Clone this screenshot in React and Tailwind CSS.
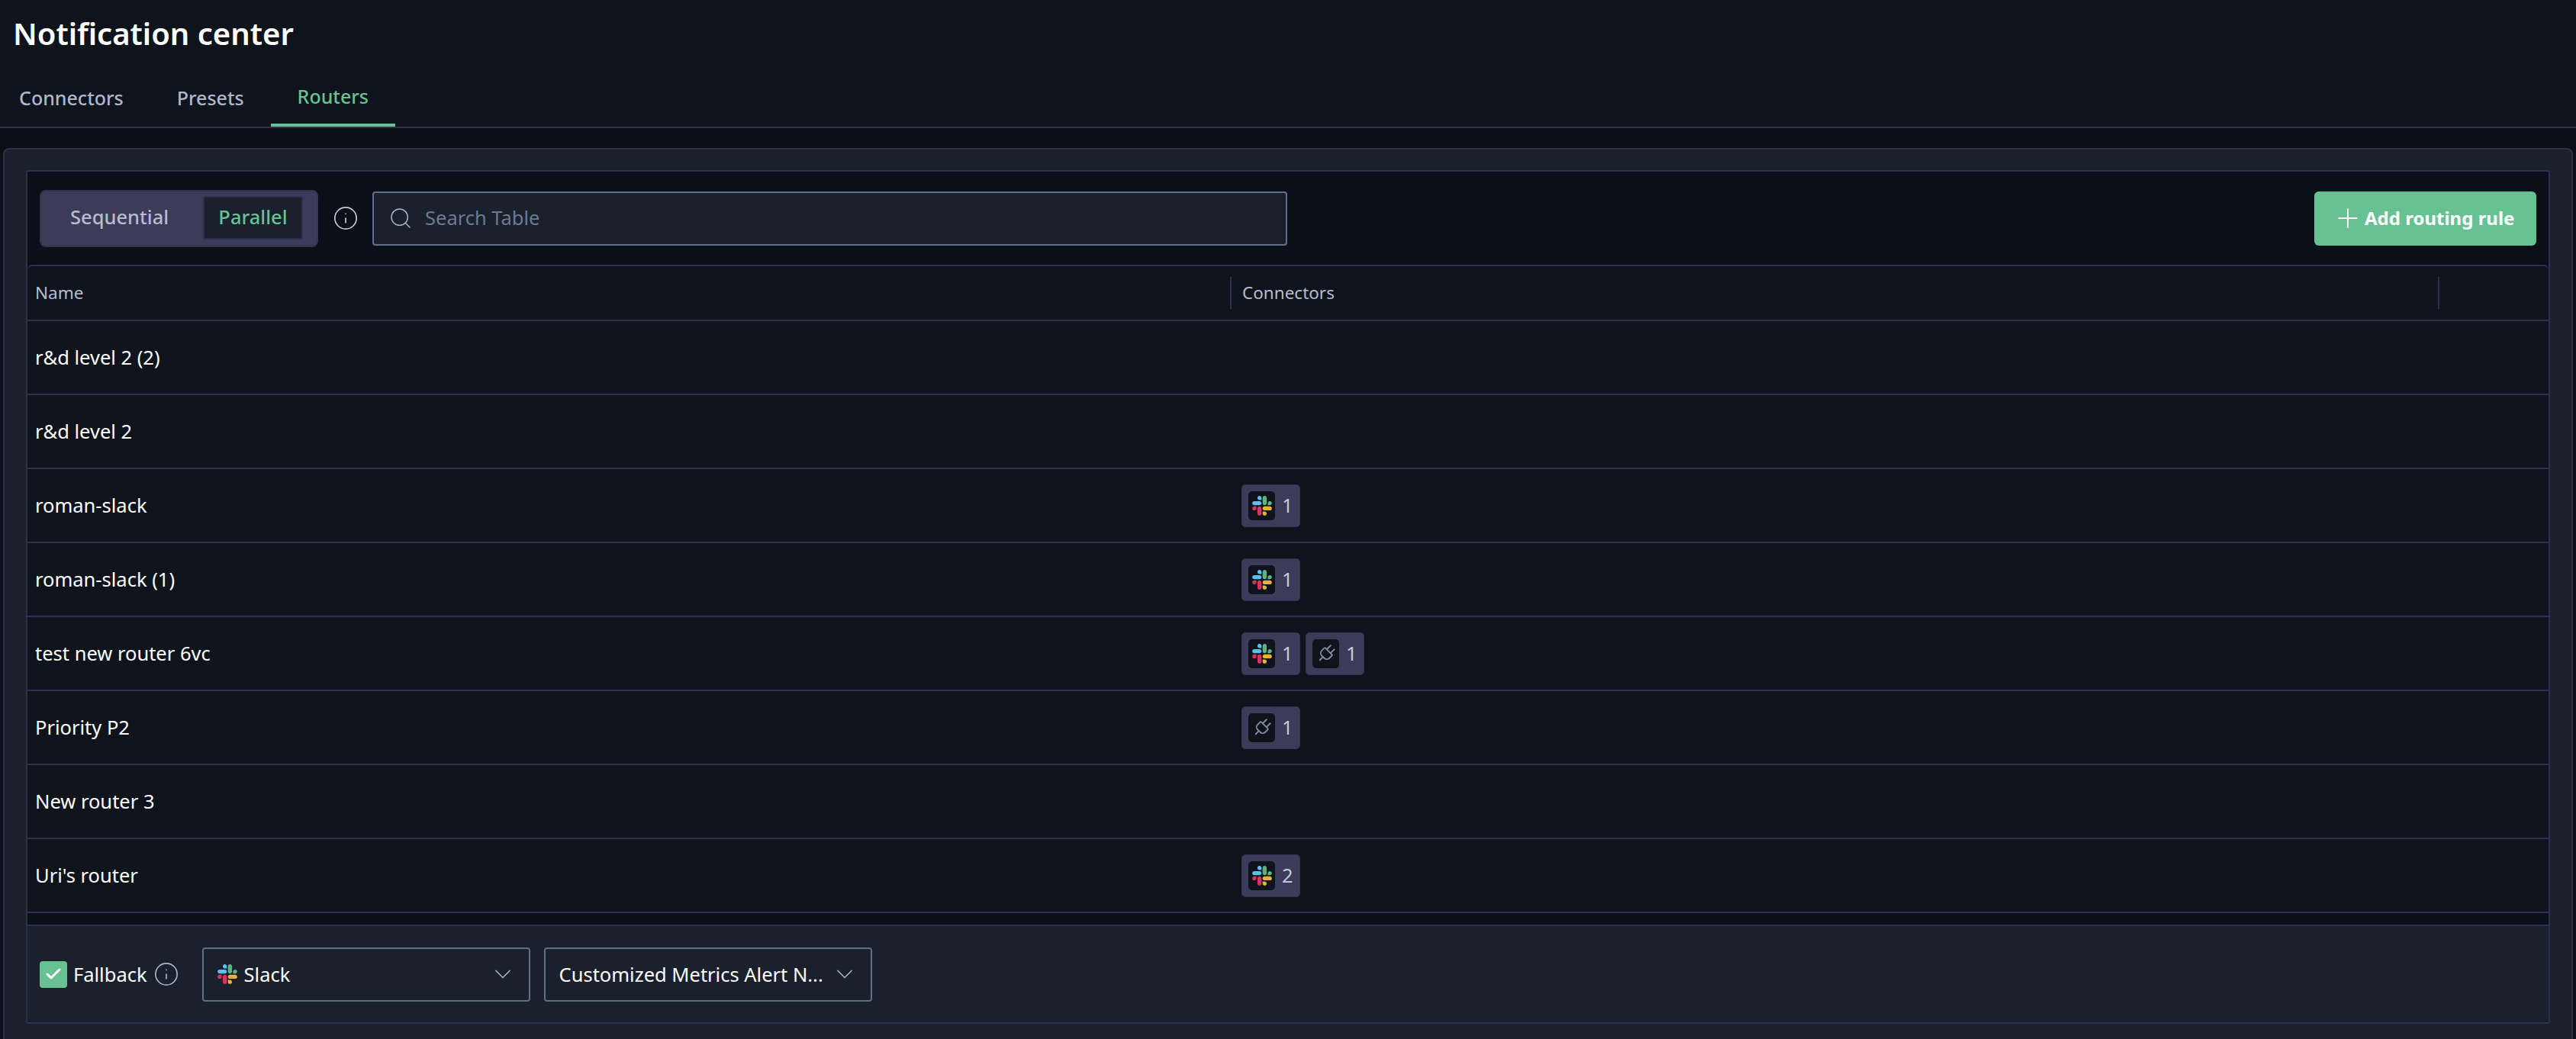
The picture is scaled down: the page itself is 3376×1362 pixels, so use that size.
import { Info, Search, Plus, Plug, ChevronDown, Check } from 'lucide-react';

const routers = [
  { name: 'r&d level 2 (2)', connectors: [] },
  { name: 'r&d level 2', connectors: [] },
  { name: 'roman-slack', connectors: [['slack', 1]] },
  { name: 'roman-slack (1)', connectors: [['slack', 1]] },
  { name: 'test new router 6vc', connectors: [['slack', 1], ['plug', 1]] },
  { name: 'Priority P2', connectors: [['plug', 1]] },
  { name: 'New router 3', connectors: [] },
  { name: "Uri's router", connectors: [['slack', 2]] },
];

function SlackLogo({ className }) {
  return (
    <svg viewBox="0 0 127 127" className={className}>
      <path fill="#D6335E" d="M27.2 80c0 7.3-5.9 13.2-13.2 13.2C6.7 93.2.8 87.3.8 80c0-7.3 5.9-13.2 13.2-13.2h13.2V80zm6.6 0c0-7.3 5.9-13.2 13.2-13.2 7.3 0 13.2 5.9 13.2 13.2v33c0 7.3-5.9 13.2-13.2 13.2-7.3 0-13.2-5.9-13.2-13.2V80z" />
      <path fill="#5BC0EB" d="M47 27c-7.3 0-13.2-5.9-13.2-13.2C33.8 6.5 39.7.6 47 .6c7.3 0 13.2 5.9 13.2 13.2V27H47zm0 6.7c7.3 0 13.2 5.9 13.2 13.2 0 7.3-5.9 13.2-13.2 13.2H13.9C6.6 60.1.7 54.2.7 46.9c0-7.3 5.9-13.2 13.2-13.2H47z" />
      <path fill="#5CB47F" d="M99.9 46.9c0-7.3 5.9-13.2 13.2-13.2 7.3 0 13.2 5.9 13.2 13.2 0 7.3-5.9 13.2-13.2 13.2H99.9V46.9zm-6.6 0c0 7.3-5.9 13.2-13.2 13.2-7.3 0-13.2-5.9-13.2-13.2V13.8C66.9 6.5 72.8.6 80.1.6c7.3 0 13.2 5.9 13.2 13.2v33.1z" />
      <path fill="#E5B13E" d="M80.1 99.8c7.3 0 13.2 5.9 13.2 13.2 0 7.3-5.9 13.2-13.2 13.2-7.3 0-13.2-5.9-13.2-13.2V99.8h13.2zm0-6.6c-7.3 0-13.2-5.9-13.2-13.2 0-7.3 5.9-13.2 13.2-13.2h33.1c7.3 0 13.2 5.9 13.2 13.2 0 7.3-5.9 13.2-13.2 13.2H80.1z" />
    </svg>
  );
}

function ConnectorBadge({ type, count }) {
  return (
    <div className="flex h-[56px] w-[77px] items-center rounded-[5px] border border-[#33324f] bg-[#3d3b5a] pl-[8px]">
      <div className="flex h-[38px] w-[35px] items-center justify-center rounded-[5px] bg-[#0f141c]">
        {type === 'slack' ? (
          <SlackLogo className="h-[26px] w-[26px]" />
        ) : (
          <Plug size={28} strokeWidth={1.6} className="rotate-45 text-[#7f8ca3]" />
        )}
      </div>
      <span className="ml-[9px] text-[25.5px] text-[#c3cad9]">{count}</span>
    </div>
  );
}

function SelectBox({ children }) {
  return (
    <div className="flex h-[71px] w-[430px] items-center justify-between rounded-[4px] border-2 border-[#5f6f8a] bg-[#1a212d] pl-[18px] pr-[16px] text-[25.5px] text-white">
      {children}
      <ChevronDown size={36} strokeWidth={1.1} className="shrink-0 text-[#aab3c5]" />
    </div>
  );
}

export default function App() {
  return (
    <div className="flex h-[1362px] w-[3376px] flex-col overflow-hidden bg-[#0b0f17] font-['Noto_Sans',sans-serif]">
      <header className="h-[168px] shrink-0 border-b-2 border-[#2b3050] bg-[#0f141c]">
        <h1 className="pl-[17px] pt-[19px] text-[40px] font-semibold leading-[50px] text-white">Notification center</h1>
        <nav className="mt-[33px] flex h-[64px] items-start text-[25px] font-medium text-[#aeb7c9]">
          <div className="pl-[25px] pr-[35px] pt-[8px]">Connectors</div>
          <div className="px-[35px] pt-[8px]">Presets</div>
          <div className="h-[64px] border-b-4 border-[#68c193] px-[35px] pt-[6px] text-[#68c193]">Routers</div>
        </nav>
      </header>

      <main className="min-h-0 flex-1 px-[4px] pt-[26px]">
        <div className="h-[1200px] rounded-[8px] border-2 border-[#2b3050] bg-[#1a212d] px-[28px] pt-[27px]">
          <div className="flex h-[1119px] flex-col rounded-[4px] border-2 border-[#2b3050] bg-[#0b0f17]">
            <div className="flex h-[122px] shrink-0 items-center justify-between pl-[16px] pr-[16px]">
              <div className="flex items-center">
                <div className="flex h-[75px] w-[365px] items-center rounded-[8px] border-2 border-[#35344f] bg-[#3d3b5a] pb-[1px] text-[25.5px] font-medium">
                  <span className="ml-[38px] pb-[2px] text-[#b5bccd]">Sequential</span>
                  <span className="ml-auto mr-[18px] flex h-[57px] w-[131px] items-center justify-center rounded-[3px] border-2 border-[#2b3050] bg-[#1a212d] pb-[2px] text-[#68c193]">Parallel</span>
                </div>
                <Info size={34} strokeWidth={1.2} className="ml-[19px] text-[#c3cad9]" />
                <div className="ml-[18px] flex h-[71px] w-[1199px] items-center rounded-[4px] border-2 border-[#5f6f8a] bg-[#1a212d] pl-[19px] text-[25.5px] text-[#6b7a93]">
                  <Search size={32} strokeWidth={1.1} className="text-[#aab3c5]" />
                  <span className="ml-[16px] pb-[2px]">Search Table</span>
                </div>
              </div>
              <button className="flex h-[71px] w-[291px] items-center rounded-[6px] bg-[#68c193] pl-[24px] text-[24px] font-bold text-white">
                <Plus size={40} strokeWidth={1.2} />
                <span className="ml-[2px] whitespace-nowrap">Add routing rule</span>
              </button>
            </div>

            <div className="grid h-[74px] shrink-0 grid-cols-[1576px_1583px_1fr] items-center rounded-t-[6px] border-y-2 border-[#2b3050] bg-[#0f141c] text-[22.5px] text-[#b5bccd]">
              <div className="pl-[10px]">Name</div>
              <div className="flex h-[42px] items-center border-l-2 border-[#2b3050] pl-[14px]">Connectors</div>
              <div className="h-[42px] border-l-2 border-[#2b3050]" />
            </div>

            {routers.map((router) => (
              <div key={router.name} className="grid h-[97px] shrink-0 grid-cols-[1576px_1fr] items-center border-b-2 border-[#2b3050] bg-[#0f141c] text-[25.5px] text-white">
                <div className="pl-[10px]">{router.name}</div>
                <div className="flex gap-[7px] pl-[15px]">
                  {router.connectors.map(([type, count], i) => (
                    <ConnectorBadge key={i} type={type} count={count} />
                  ))}
                </div>
              </div>
            ))}

            <div className="flex-1" />

            <div className="flex h-[128px] shrink-0 items-center rounded-b-[4px] border-t-2 border-[#2b3050] bg-[#1a212d] pl-[16px]">
              <div className="flex h-[35px] w-[36px] items-center justify-center rounded-[4px] bg-[#68c193]">
                <Check size={24} strokeWidth={3} className="text-white" />
              </div>
              <span className="ml-[8px] text-[25.5px] text-white">Fallback</span>
              <Info size={34} strokeWidth={1.2} className="ml-[8px] text-[#aab3c5]" />
              <div className="ml-[30px] flex gap-[18px]">
                <SelectBox>
                  <span className="flex items-center gap-[9px]">
                    <SlackLogo className="h-[26px] w-[26px]" />
                    Slack
                  </span>
                </SelectBox>
                <SelectBox>
                  <span className="truncate">Customized Metrics Alert N...</span>
                </SelectBox>
              </div>
            </div>
          </div>
        </div>
      </main>
    </div>
  );
}
